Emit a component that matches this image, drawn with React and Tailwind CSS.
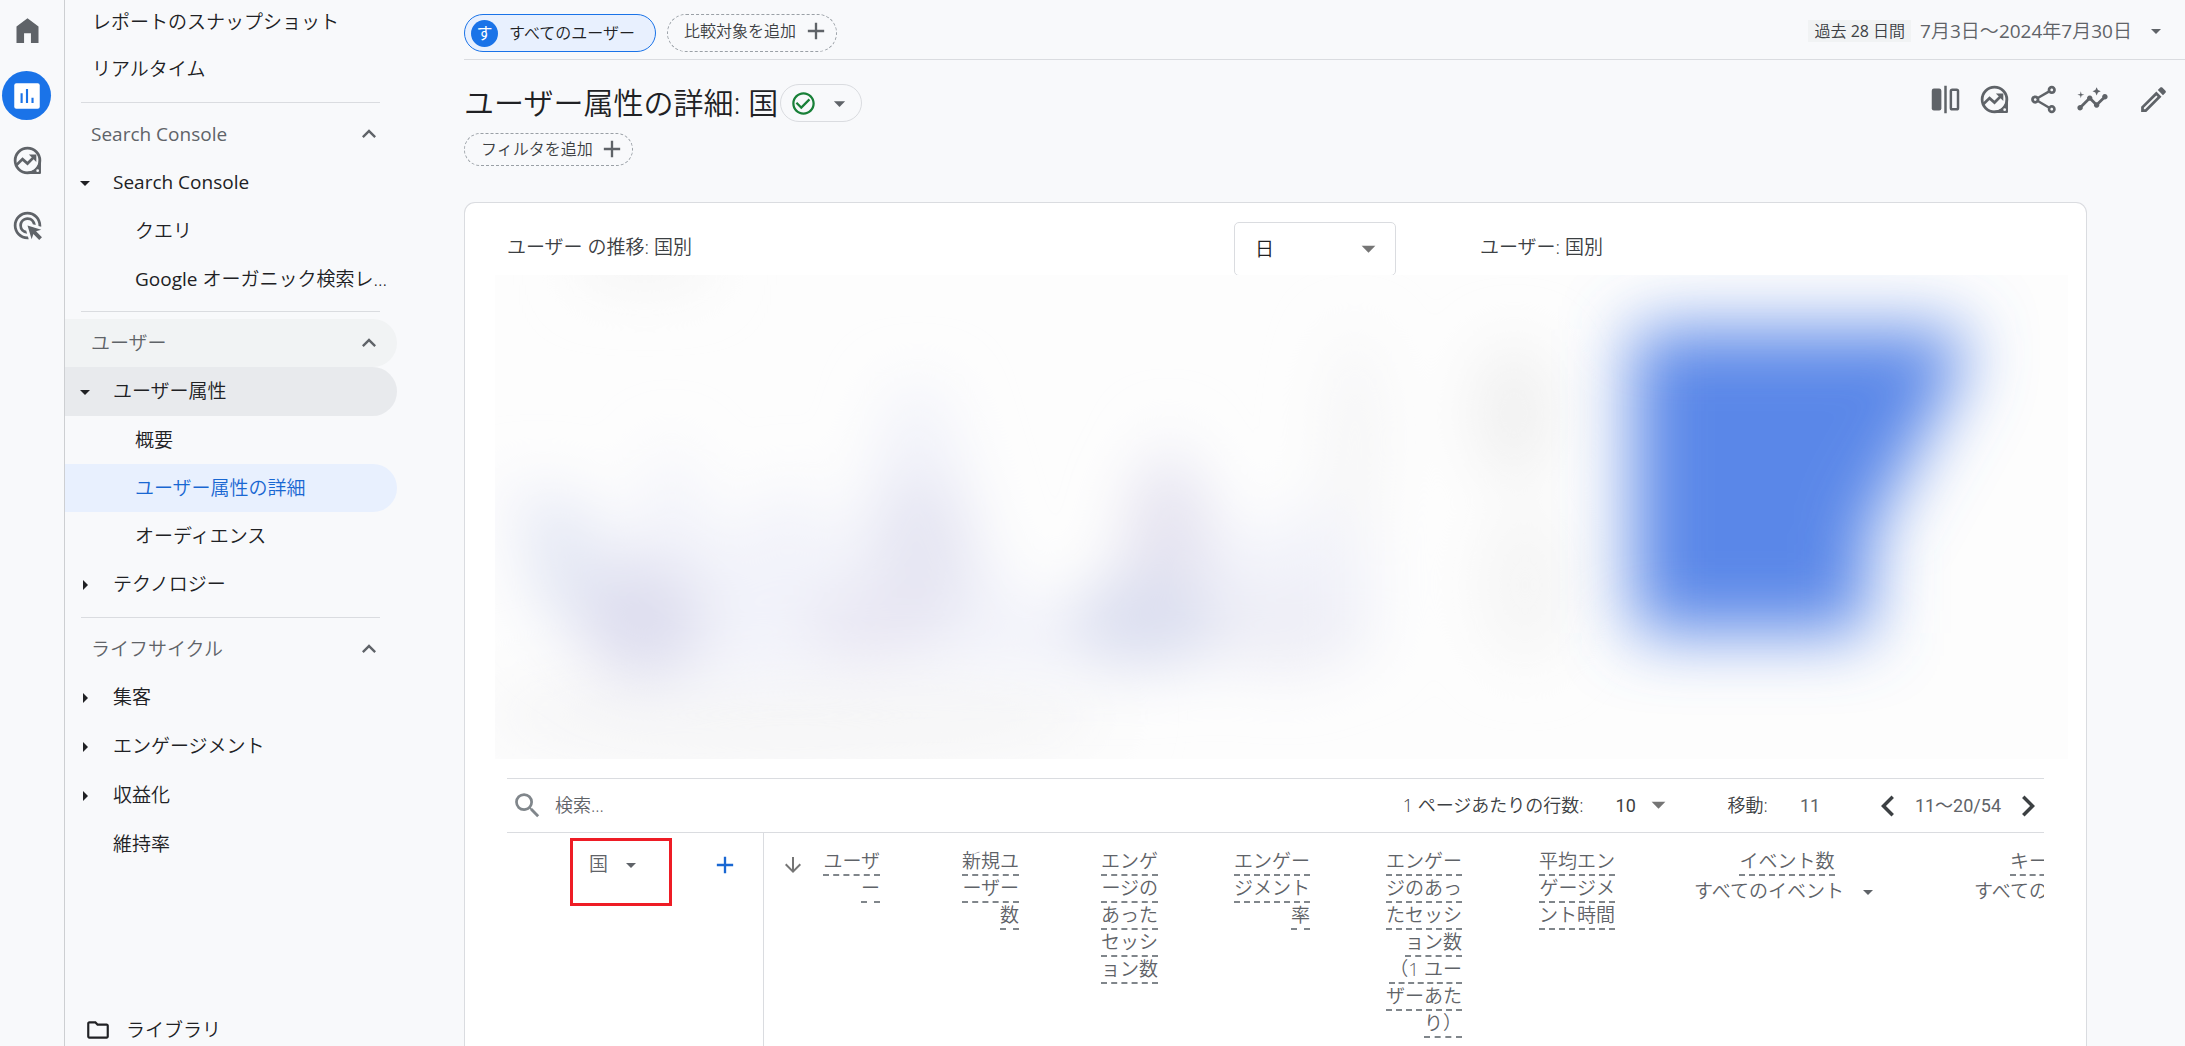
import { useState } from "react";
import {
  MdAdd,
  MdAdsClick,
  MdArrowDownward,
  MdArrowDropDown,
  MdArrowRight,
  MdCheckCircleOutline,
  MdChevronLeft,
  MdChevronRight,
  MdInsights,
  MdKeyboardArrowUp,
  MdOutlineEdit,
  MdOutlineFolder,
  MdOutlineShare,
  MdSearch,
} from "react-icons/md";

const HomeIcon = () => (
  <svg width="33" height="33" viewBox="0 0 24 24" fill="currentColor">
    <path d="M4 21V9l8-6 8 6v12h-5.5v-7h-5v7z" />
  </svg>
);

const ReportsIcon = () => (
  <svg width="34" height="34" viewBox="0 0 24 24" fill="none">
    <rect x="3" y="3" width="18" height="18" rx="1.5" fill="#fff" />
    <path d="M8.2 10v7M12 7v10M15.9 13.2V17" stroke="#1a73e8" strokeWidth="1.5" />
  </svg>
);

const ExploreIcon = () => (
  <svg width="33" height="33" viewBox="0 0 24 24" fill="none" stroke="currentColor" strokeWidth="2">
    <circle cx="12" cy="12" r="9" />
    <path d="M21 12v9h-9c4 0 9-3 9-9z" fill="currentColor" strokeWidth="1.6" strokeLinejoin="round" />
    <circle cx="19.4" cy="19.4" r="1" fill="#f8f9fb" stroke="none" />
    <path d="M3.8 15.4 8.4 11l3.6 3.2 5-5" />
    <path d="M13 7.6h5.4V13z" fill="currentColor" stroke="none" />
  </svg>
);

const CompareIcon = () => (
  <svg width="33" height="33" viewBox="0 0 24 24" fill="none">
    <rect x="2" y="4" width="7" height="16" rx="1.6" fill="currentColor" />
    <path d="M12 2v20" stroke="currentColor" strokeWidth="1.8" />
    <rect x="15.9" y="4.9" width="5.2" height="14.2" rx="1" stroke="currentColor" strokeWidth="1.8" />
  </svg>
);

const SectionHeader = ({ label, highlighted }) => (
  <button
    className={`flex h-12 w-[332px] items-center justify-between rounded-r-full pl-[26px] pr-[14px] text-[#5f6368] ${
      highlighted ? "bg-[#f1f3f4]" : ""
    }`}
  >
    <span className={/^[A-Z]/.test(label) ? "font-normal" : ""}>{label}</span>
    <MdKeyboardArrowUp size={28} />
  </button>
);

const TopItem = ({ label, arrow, highlighted }) => (
  <a
    href="#"
    className={`flex h-[49px] w-[332px] items-center rounded-r-full ${highlighted ? "bg-[#e8eaed]" : ""}`}
  >
    <span className="w-12 pl-2">
      {arrow === "down" && <MdArrowDropDown size={24} />}
      {arrow === "right" && <MdArrowRight size={24} />}
    </span>
    <span className={/^[A-Z]/.test(label) ? "font-normal" : ""}>{label}</span>
  </a>
);

const ChildItem = ({ children, active }) => (
  <a
    href="#"
    className={`flex h-12 w-[332px] items-center whitespace-nowrap rounded-r-full pl-[70px] ${
      active ? "bg-[#e8f0fe] text-[#1967d2]" : ""
    }`}
  >
    <span>{children}</span>
  </a>
);

const Divider = () => <hr className="mx-4 mb-[7px] mt-2 w-[299px] shrink-0 border-[#dadce0]" />;

const Rail = () => (
  <nav className="flex w-[65px] shrink-0 flex-col border-r border-[#cdcfd2] pl-[2px] pt-[14px] text-[#5f6368]">
    <a href="#" aria-label="ホーム" className="flex h-[33px] w-[50px] items-center justify-center">
      <HomeIcon />
    </a>
    <a
      href="#"
      aria-label="レポート"
      className="mt-6 flex size-[49px] items-center justify-center rounded-full bg-[#1a73e8]"
    >
      <ReportsIcon />
    </a>
    <a href="#" aria-label="探索" className="mt-4 flex h-[49px] w-[50px] items-center justify-center">
      <ExploreIcon />
    </a>
    <a href="#" aria-label="広告" className="mt-4 flex h-[49px] w-[50px] items-center justify-center">
      <MdAdsClick size={33} />
    </a>
  </nav>
);

const Sidebar = () => (
  <nav className="flex w-[399px] shrink-0 flex-col text-[19px] text-[#202124]">
    <a href="#" className="flex h-[45px] items-center pl-[27px]">
      レポートのスナップショット
    </a>
    <a href="#" className="flex h-[49px] items-center pl-[27px]">
      リアルタイム
    </a>
    <Divider />
    <SectionHeader label="Search Console" />
    <TopItem label="Search Console" arrow="down" />
    <ChildItem>クエリ</ChildItem>
    <ChildItem>
      <span className="font-normal">Google</span> オーガニック検索レ...
    </ChildItem>
    <Divider />
    <SectionHeader label="ユーザー" highlighted />
    <TopItem label="ユーザー属性" arrow="down" highlighted />
    <ChildItem>概要</ChildItem>
    <ChildItem active>ユーザー属性の詳細</ChildItem>
    <ChildItem>オーディエンス</ChildItem>
    <TopItem label="テクノロジー" arrow="right" />
    <Divider />
    <SectionHeader label="ライフサイクル" />
    <TopItem label="集客" arrow="right" />
    <TopItem label="エンゲージメント" arrow="right" />
    <TopItem label="収益化" arrow="right" />
    <TopItem label="維持率" />
    <a href="#" className="mt-auto flex h-8 items-center gap-[15px] pl-[20px]">
      <MdOutlineFolder size={26} />
      ライブラリ
    </a>
  </nav>
);

const TopBar = () => (
  <header className="flex h-[60px] items-start justify-between border-b border-[#dadce0] pt-[14px] text-[16px]">
    <div className="flex gap-[11px]">
      <button className="flex h-[38px] items-center gap-[11px] rounded-full border border-[#1a73e8] bg-[#e8f0fe] pl-[6px] pr-[20px] text-[#202124]">
        <span className="flex size-[27px] items-center justify-center rounded-full bg-[#1a73e8] font-normal text-white">
          す
        </span>
        すべてのユーザー
      </button>
      <button className="flex h-[38px] items-center gap-[6px] rounded-full border border-dashed border-[#9aa0a6] pb-1 pl-4 pr-[6px] text-[#3c4043]">
        比較対象を追加
        <MdAdd size={28} className="text-[#5f6368]" />
      </button>
    </div>
    <button className="flex h-[34px] items-center pr-[17px] text-[#5f6368]">
      <span className="mr-[9px] bg-[#f1f3f4] px-[6px] leading-[22px] text-[#3c4043]">
        過去 <span className="font-normal">28</span> 日間
      </span>
      <span className="text-[19px]">
        <span className="font-normal">7</span>月<span className="font-normal">3</span>日〜
        <span className="font-normal">2024</span>年<span className="font-normal">7</span>月
        <span className="font-normal">30</span>日
      </span>
      <MdArrowDropDown size={24} className="ml-3" />
    </button>
  </header>
);

const TitleRow = () => (
  <div className="mt-6 flex items-start justify-between pr-[15px]">
    <div className="flex h-[38px] items-center gap-[2px]">
      <h1 className="text-[30px] leading-[36px] text-[#202124]">ユーザー属性の詳細: 国</h1>
      <button
        aria-label="レポートの状態"
        className="flex h-[38px] w-[82px] items-center gap-[9px] rounded-full border border-[#dadce0] pl-[9px]"
      >
        <MdCheckCircleOutline size={27} className="text-[#188038]" />
        <MdArrowDropDown size={27} className="text-[#5f6368]" />
      </button>
    </div>
    <div className="flex h-[30px] items-center gap-4 text-[#5f6368]">
      <button aria-label="比較を編集">
        <CompareIcon />
      </button>
      <button aria-label="探索">
        <ExploreIcon />
      </button>
      <button aria-label="共有">
        <MdOutlineShare size={33} />
      </button>
      <button aria-label="インサイト">
        <MdInsights size={33} />
      </button>
      <button aria-label="編集" className="ml-3">
        <MdOutlineEdit size={33} />
      </button>
    </div>
  </div>
);

// Soft placeholder for the trend chart and the map
const Charts = () => (
  <svg
    className="ml-[30px] mr-[18px] block h-[484px] shrink-0"
    viewBox="0 0 1573 484"
    preserveAspectRatio="none"
  >
    <defs>
      <filter id="soft" x="-50%" y="-50%" width="200%" height="200%">
        <feGaussianBlur stdDeviation="30" />
      </filter>
      <filter id="softer" x="-50%" y="-50%" width="200%" height="200%">
        <feGaussianBlur stdDeviation="34" />
      </filter>
    </defs>
    <rect width="1573" height="484" fill="#fdfdfd" />
    <ellipse cx="300" cy="440" rx="320" ry="60" fill="#f6f6f7" filter="url(#softer)" />
    <g filter="url(#soft)">
      <rect x="90" y="-60" width="120" height="70" fill="#f4f4f4" />
      <path
        d="M0 210 L80 210 L130 270 L175 160 L230 270 L294 200 L350 270 L400 110 L446 110 L500 290 L560 340 L610 320 L671 150 L750 270 L830 220 L880 170 L880 380 L640 400 L400 395 L160 410 L60 360 Z"
        fill="#f2f3fa"
      />
      <ellipse cx="66" cy="285" rx="34" ry="60" fill="#e4e8f4" />
      <ellipse cx="147" cy="345" rx="62" ry="60" fill="#dedeef" />
      <ellipse cx="426" cy="285" rx="46" ry="85" fill="#e5e5f2" />
      <ellipse cx="375" cy="350" rx="65" ry="34" fill="#e8e6f3" />
      <ellipse cx="671" cy="275" rx="42" ry="90" fill="#e5e3f0" />
      <ellipse cx="650" cy="345" rx="76" ry="46" fill="#dcdff0" />
      <ellipse cx="790" cy="355" rx="70" ry="46" fill="#eeeef6" />
      <ellipse cx="860" cy="165" rx="30" ry="110" fill="#f6f6f7" />
      <ellipse cx="1019" cy="138" rx="40" ry="70" fill="#f0f0f0" />
      <ellipse cx="1030" cy="310" rx="45" ry="80" fill="#f5f5f5" />
    </g>
    <path
      d="M1138 54H1470L1466 95L1374 260V358H1138Z"
      fill="#5a87e8"
      filter="url(#softer)"
    />
  </svg>
);

const Pager = () => {
  const [rows, setRows] = useState("10");

  return (
    <div className="flex items-center text-[18px] text-[#3c4043]">
      <label htmlFor="rows">1 ページあたりの行数:</label>
      <div className="relative ml-8">
        <select
          id="rows"
          value={rows}
          onChange={(e) => setRows(e.target.value)}
          className="w-[58px] appearance-none bg-transparent font-['Roboto',sans-serif] font-normal"
        >
          <option>10</option>
          <option>25</option>
          <option>50</option>
        </select>
        <MdArrowDropDown size={33} className="pointer-events-none absolute -right-px -top-1 text-[#757575]" />
      </div>
      <label htmlFor="goto" className="ml-[54px]">
        移動:
      </label>
      <input
        id="goto"
        defaultValue="11"
        className="ml-8 w-[40px] bg-transparent font-['Roboto',sans-serif] font-normal text-[#5f6368]"
      />
      <button aria-label="前へ" className="ml-8 flex w-8 justify-center">
        <MdChevronLeft size={42} className="shrink-0" />
      </button>
      <span className="mx-[11px] font-['Roboto','Noto_Sans_CJK_JP',sans-serif] font-normal text-[#5f6368]">
        11〜20/54
      </span>
      <button aria-label="次へ" className="flex w-8 justify-center">
        <MdChevronRight size={42} className="shrink-0" />
      </button>
    </div>
  );
};

const metrics = [
  { width: "w-[139px]", lines: ["新規ユ", "ーザー", "数"] },
  { width: "w-[139px]", lines: ["エンゲ", "ージの", "あった", "セッシ", "ョン数"] },
  { width: "w-[152px]", lines: ["エンゲー", "ジメント", "率"] },
  {
    width: "w-[152px]",
    lines: ["エンゲー", "ジのあっ", "たセッシ", "ョン数", "（1 ユー", "ザーあた", "り）"],
  },
  { width: "w-[153px]", lines: ["平均エン", "ゲージメ", "ント時間"] },
];

const events = [
  { name: "イベント数", filter: "すべてのイベント" },
  { name: "キーイベント", filter: "すべてのイベント" },
];

const MetricLabel = ({ lines }) => (
  <span className="flex flex-col items-end">
    {lines.map((line) => (
      <span key={line} className="h-[27px] whitespace-nowrap border-b-2 border-dashed border-[#80868b] leading-[25px]">
        {line}
      </span>
    ))}
  </span>
);

const ReportTable = () => (
  <div className="flex-1 overflow-hidden">
    <table className="w-[1649px] table-fixed text-[19px] text-[#5f6368]">
      <thead>
        <tr className="align-top">
          <th className="h-[220px] w-[256px] border-r border-[#dadce0] p-0 font-[350]">
            <div className="flex">
              <button className="ml-[63px] mt-[5px] flex h-[68px] w-[102px] items-start gap-[11px] border-3 border-[#ee1c25] pl-[16px] pt-[10px] leading-[27px]">
                国
                <MdArrowDropDown size={24} className="mt-[2px]" />
              </button>
              <button aria-label="ディメンションを追加" className="ml-[39px] mt-[18px] self-start text-[#1967d2]">
                <MdAdd size={28} />
              </button>
            </div>
          </th>
          <th className="w-[117px] p-0 pt-4 font-[350]">
            <span className="flex items-start justify-end gap-[18px]">
              <MdArrowDownward size={24} className="mt-1 text-[#757575]" />
              <MetricLabel lines={["ユーザ", "ー"]} />
            </span>
          </th>
          {metrics.map((metric) => (
            <th key={metric.lines.join("")} className={`${metric.width} p-0 pt-4 font-[350]`}>
              <MetricLabel lines={metric.lines} />
            </th>
          ))}
          {events.map((event, i) => (
            <th key={event.name} className={`p-0 pt-4 font-[350] ${i === 0 ? "w-[278px] pl-[78px]" : "w-[263px] pl-20"}`}>
              <span className="flex w-[188px] flex-col items-center">
                <MetricLabel lines={[event.name]} />
                <button className="mt-[2px] flex items-center gap-3 whitespace-nowrap leading-[27px]">
                  {event.filter}
                  <MdArrowDropDown size={24} />
                </button>
              </span>
            </th>
          ))}
        </tr>
      </thead>
    </table>
  </div>
);

const App = () => {
  const [period, setPeriod] = useState("日");

  return (
    <div
      lang="ja"
      className="flex h-screen overflow-hidden bg-[#f8f9fb] font-['Open_Sans','Noto_Sans_CJK_JP',sans-serif] font-[350]"
    >
      <Rail />
      <Sidebar />
      <main className="flex min-w-0 flex-1 flex-col">
        <TopBar />
        <TitleRow />
        <button className="mt-[11px] flex h-[33px] shrink-0 items-center gap-[5px] self-start rounded-full border border-dashed border-[#9aa0a6] pb-[2px] pl-4 pr-[6px] text-[16px] text-[#3c4043]">
          フィルタを追加
          <MdAdd size={28} className="text-[#5f6368]" />
        </button>

        <section className="mr-[98px] mt-9 flex min-h-0 flex-1 flex-col rounded-t-[11px] border border-b-0 border-[#dadce0] bg-white">
          <div className="grid h-[72px] shrink-0 grid-cols-[889fr_564fr] gap-x-[84px] overflow-hidden px-[42px] text-[19px] text-[#3c4043]">
            <div className="flex items-start justify-between">
              <h2 className="pt-[30px] leading-[28px]">ユーザー の推移: 国別</h2>
              <div className="relative mt-[19px]">
                <select
                  aria-label="期間"
                  value={period}
                  onChange={(e) => setPeriod(e.target.value)}
                  className="h-[54px] w-[162px] appearance-none rounded-[5px] border border-[#dadce0] bg-white pl-5 text-[#202124]"
                >
                  <option>日</option>
                  <option>週</option>
                  <option>月</option>
                </select>
                <MdArrowDropDown
                  size={33}
                  className="pointer-events-none absolute right-[11px] top-[10px] text-[#757575]"
                />
              </div>
            </div>
            <h2 className="pt-[30px] leading-[28px]">ユーザー: 国別</h2>
          </div>

          <Charts />

          <div className="mt-[19px] flex min-h-0 flex-1 flex-col px-[42px]">
            <div className="flex h-[55px] shrink-0 items-center justify-between border-y border-[#dadce0]">
              <div className="flex items-center gap-[11px] pl-1">
                <MdSearch size={33} className="text-[#80868b]" />
                <input
                  aria-label="検索"
                  placeholder="検索..."
                  className="w-[300px] bg-transparent text-[18px] placeholder:text-[#5f6368]"
                />
              </div>
              <Pager />
            </div>
            <ReportTable />
          </div>
        </section>
      </main>
    </div>
  );
};

export default App;
